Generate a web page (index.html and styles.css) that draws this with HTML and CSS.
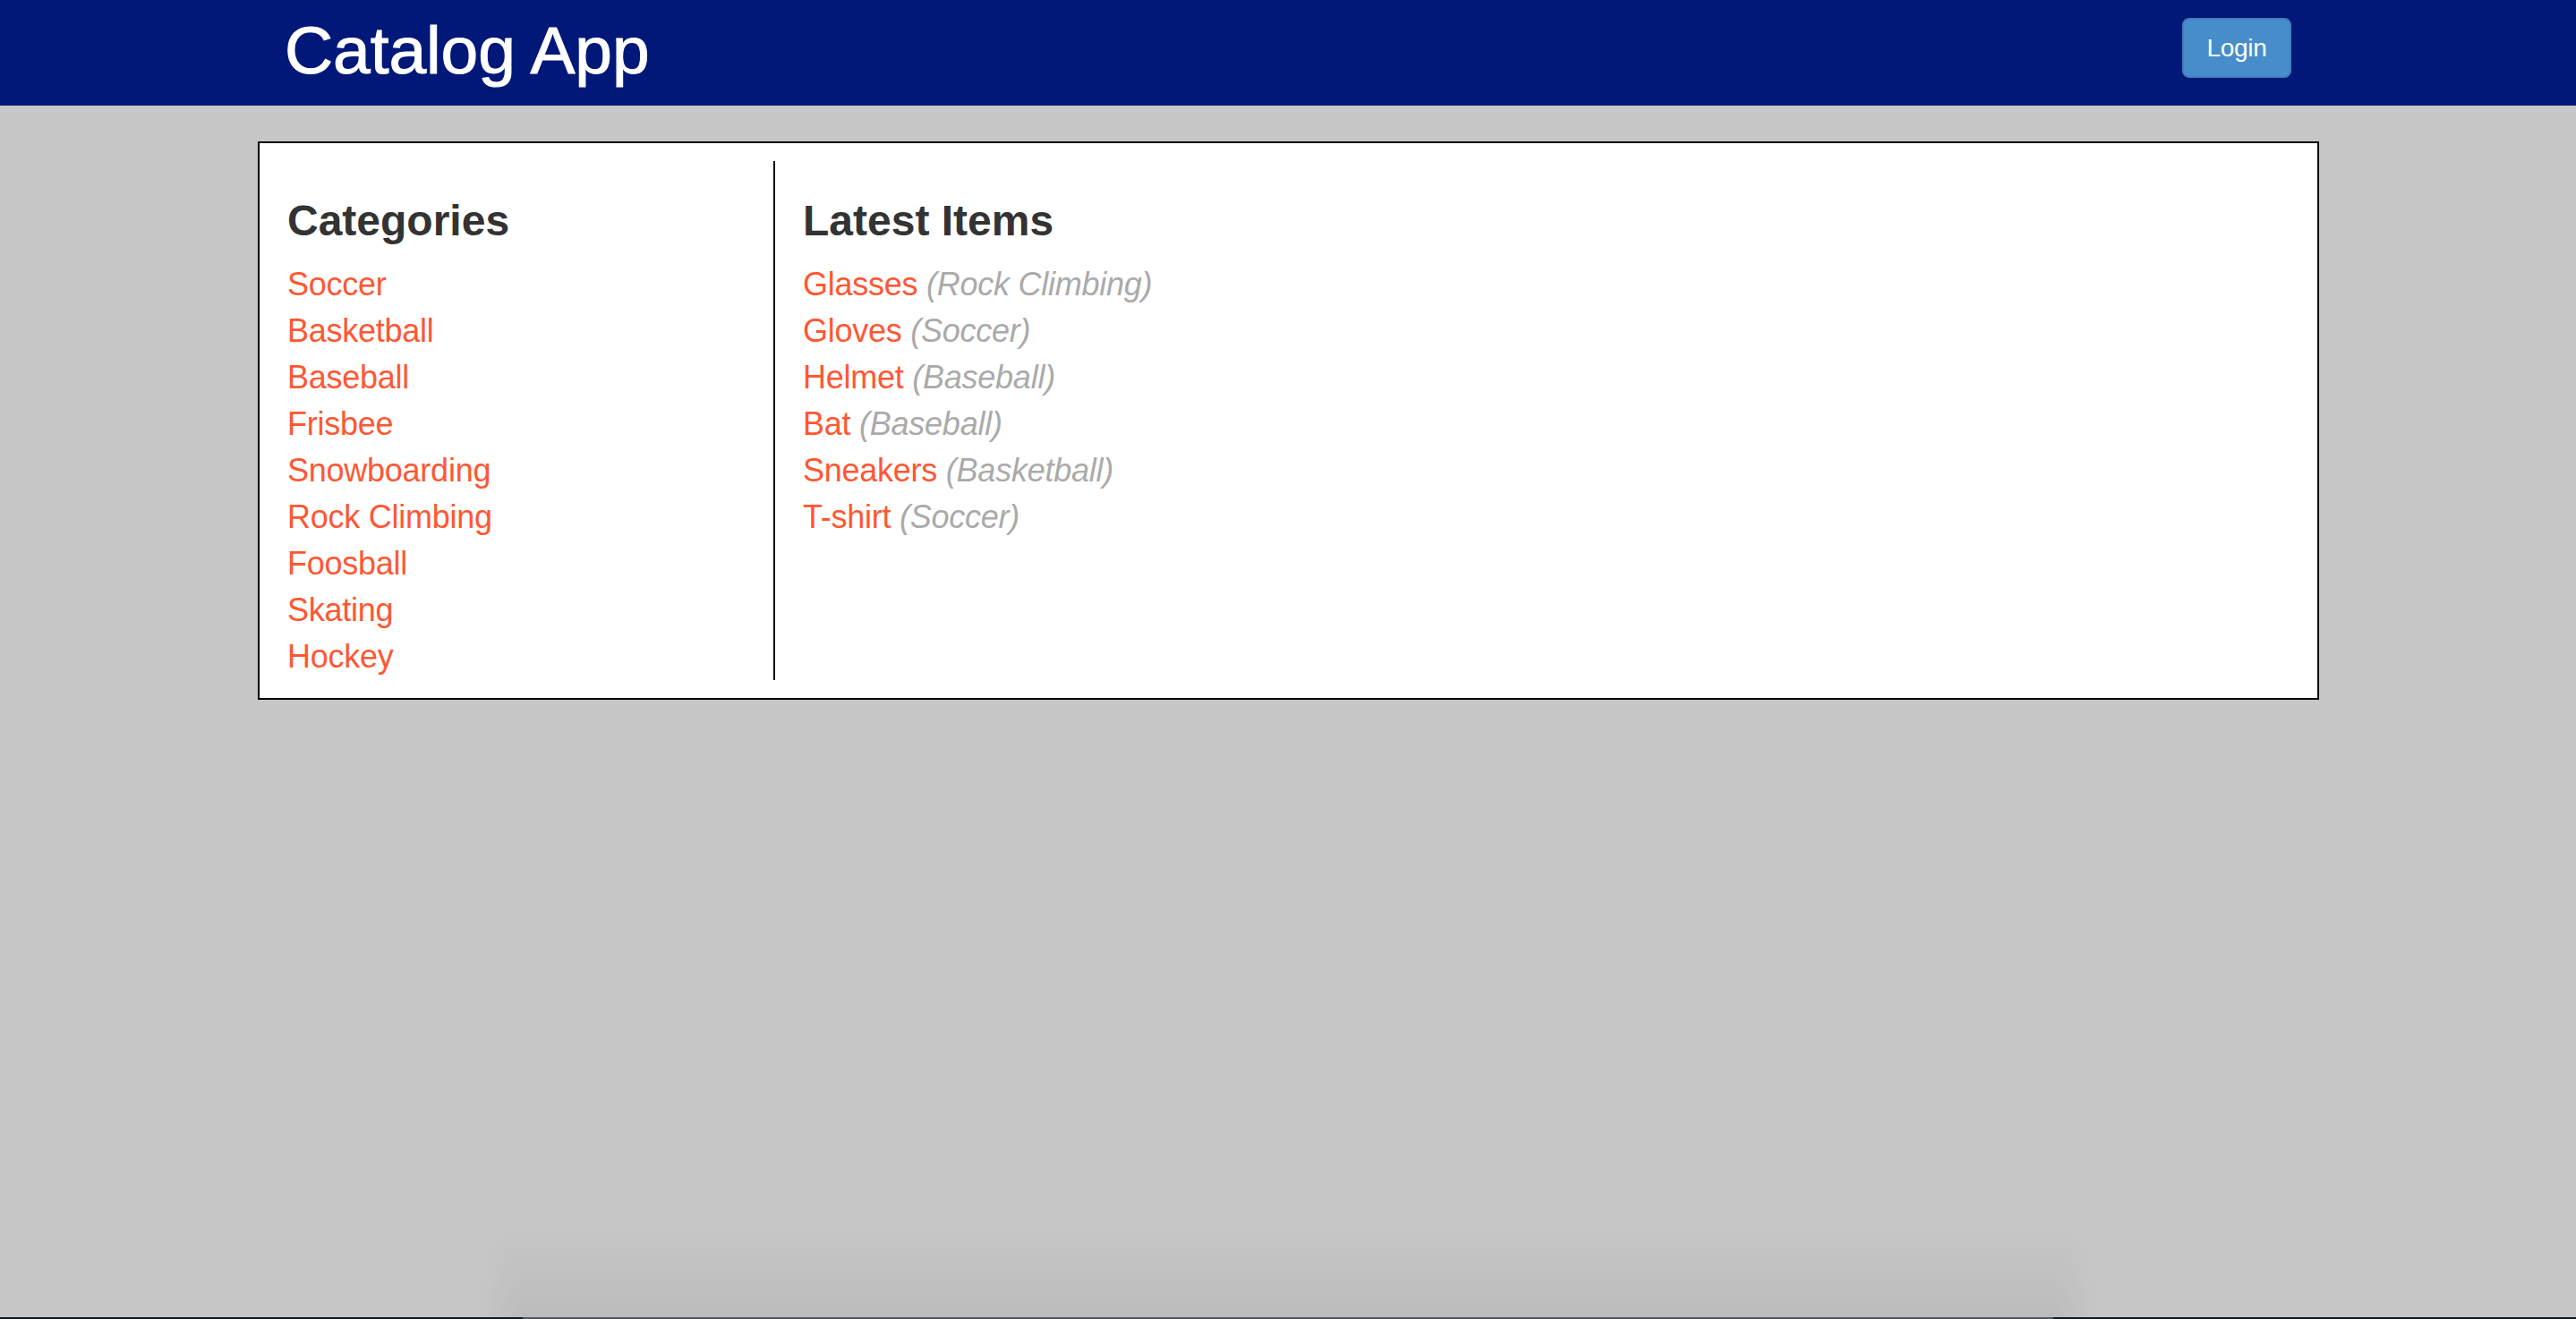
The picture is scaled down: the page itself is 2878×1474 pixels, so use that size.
FILE: index.html
```html
<!DOCTYPE html>
<html lang="en">
<head>
<meta charset="utf-8">
<title>Catalog App</title>
<link rel="stylesheet" href="styles.css">
</head>
<body>
<header class="topbar">
  <div class="topbar-inner">
    <h1 class="brand">Catalog App</h1>
    <a class="btn-login" href="#">Login</a>
  </div>
</header>
<main class="panel">
  <section class="col col-categories">
    <h3 class="col-title">Categories</h3>
    <ul class="list">
      <li><a href="#">Soccer</a></li>
      <li><a href="#">Basketball</a></li>
      <li><a href="#">Baseball</a></li>
      <li><a href="#">Frisbee</a></li>
      <li><a href="#">Snowboarding</a></li>
      <li><a href="#">Rock Climbing</a></li>
      <li><a href="#">Foosball</a></li>
      <li><a href="#">Skating</a></li>
      <li><a href="#">Hockey</a></li>
    </ul>
  </section>
  <section class="col col-items">
    <h3 class="col-title">Latest Items</h3>
    <ul class="list">
      <li><a href="#">Glasses</a> <span class="cat">(Rock Climbing)</span></li>
      <li><a href="#">Gloves</a> <span class="cat">(Soccer)</span></li>
      <li><a href="#">Helmet</a> <span class="cat">(Baseball)</span></li>
      <li><a href="#">Bat</a> <span class="cat">(Baseball)</span></li>
      <li><a href="#">Sneakers</a> <span class="cat">(Basketball)</span></li>
      <li><a href="#">T-shirt</a> <span class="cat">(Soccer)</span></li>
    </ul>
  </section>
</main>
<div class="dock-shadow"></div>
<div class="screen-edge"></div>
</body>
</html>
```

FILE: styles.css
```css
html, body {
  margin: 0;
  padding: 0;
}
body {
  background: #c6c6c6;
  font-family: "Liberation Sans", Arial, Helvetica, sans-serif;
  color: #333333;
  min-height: 1474px;
  overflow: hidden;
}
.topbar {
  background: #011879;
  height: 118px;
}
.topbar-inner {
  width: 2242px;
  margin: 0 auto;
  display: flex;
  justify-content: space-between;
  align-items: flex-start;
}
.brand {
  margin: 0;
  padding-top: 11px;
  font-size: 75px;
  font-weight: normal;
  line-height: 90px;
  color: #ffffff;
  letter-spacing: -0.1px;
  -webkit-text-stroke: 1px #ffffff;
}
.btn-login {
  margin-top: 20px;
  display: block;
  box-sizing: border-box;
  width: 122px;
  height: 67px;
  line-height: 63px;
  text-align: center;
  background: #478dc9;
  border: 2px solid #3f80bd;
  border-radius: 8px;
  color: #ffffff;
  font-size: 28px;
  letter-spacing: -0.3px;
  text-decoration: none;
}
.panel {
  box-sizing: border-box;
  width: 2303px;
  margin: 40px auto 0 288px;
  background: #ffffff;
  border: 2px solid #000000;
  padding: 20px 0;
  display: flex;
  align-items: flex-start;
}
.col {
  box-sizing: border-box;
  padding: 0 31px;
}
.col-categories {
  flex: 0 0 576px;
  border-right: 2px solid #000000;
  padding-right: 0;
}
.col-items {
  flex: 1 1 auto;
}
.col-title {
  margin: 41px 0 19px;
  font-size: 48px;
  font-weight: bold;
  line-height: 52px;
  color: #333333;
}
.list {
  list-style: none;
  margin: 0;
  padding: 0;
}
.list li {
  font-size: 36px;
  line-height: 52px;
  letter-spacing: -0.25px;
}
.list a {
  color: #ff5733;
  text-decoration: none;
}
.cat {
  color: #aaaaaa;
  font-style: italic;
}
.dock-shadow {
  position: fixed;
  left: 560px;
  width: 1758px;
  bottom: -20px;
  height: 120px;
  background: linear-gradient(to bottom, rgba(0,0,0,0) 0, rgba(0,0,0,0.02) 40%, rgba(0,0,0,0.07) 100%);
  filter: blur(14px);
  pointer-events: none;
}
.screen-edge {
  position: fixed;
  left: 0;
  right: 0;
  bottom: 0;
  height: 2px;
  background: linear-gradient(to right, #0b1a26 0, #0b1a26 584px, #4d5560 584px, #4d5560 2294px, #0b1a26 2294px);
}
```
